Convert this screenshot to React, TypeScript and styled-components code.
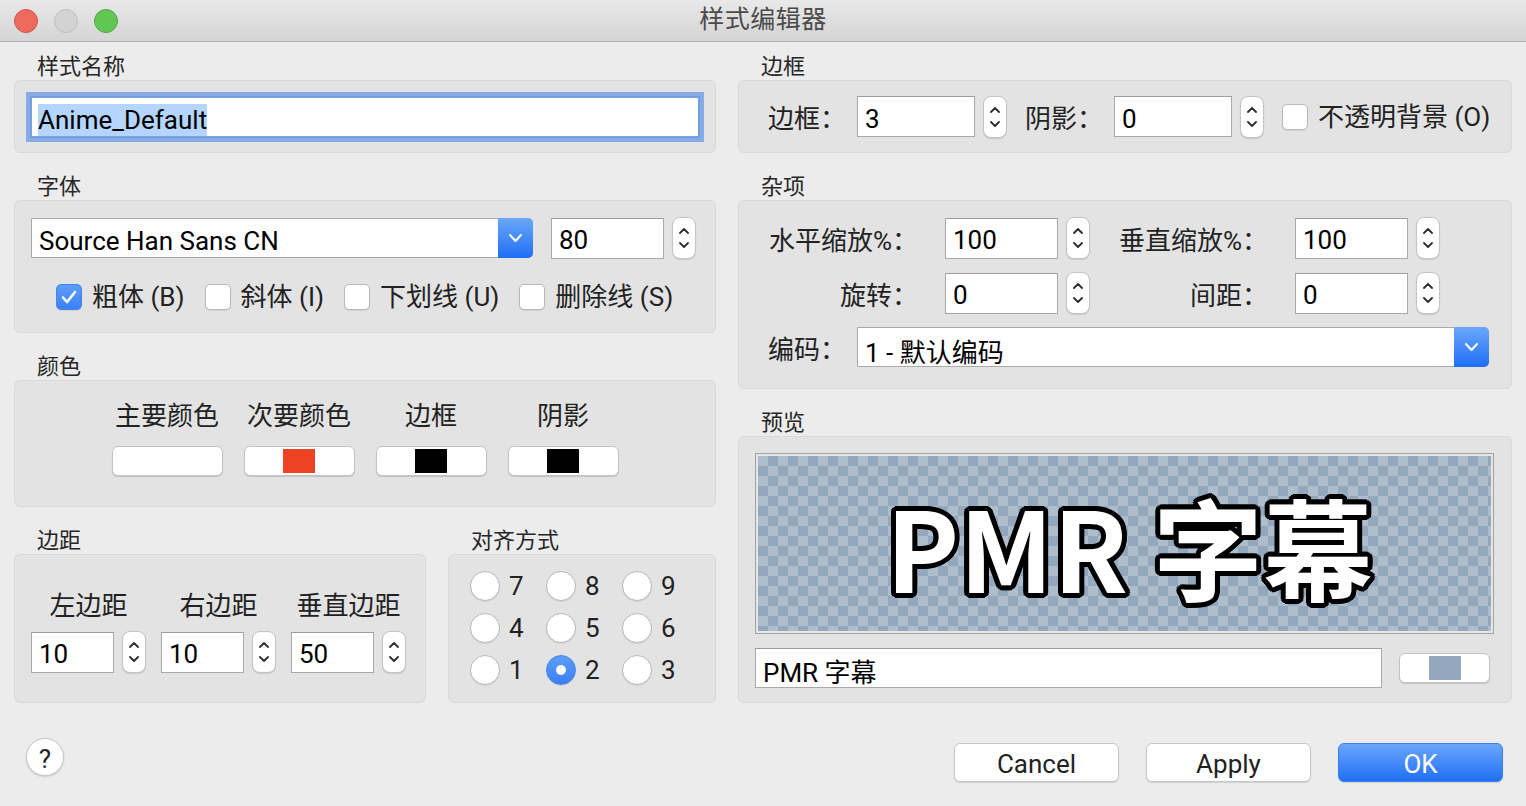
import React from "react";
import styled, { createGlobalStyle } from "styled-components";

const FONT = `Roboto, "Noto Sans CJK SC", sans-serif`;

const GlobalStyle = createGlobalStyle`
  * { box-sizing: border-box; }
  html, body { margin: 0; padding: 0; background: #ececec; }
  body { font-family: ${FONT}; color: #222; }
`;

const outline = (r: number, c: string) => {
  const s: string[] = [];
  for (let a = 0; a < 360; a += 20) {
    const x = (r * Math.cos((a * Math.PI) / 180)).toFixed(1);
    const y = (r * Math.sin((a * Math.PI) / 180)).toFixed(1);
    s.push(`${x}px ${y}px 0 ${c}`);
  }
  return s.join(", ");
};

const Window = styled.div`
  width: 1526px;
  height: 806px;
  display: flex;
  flex-direction: column;
  background: #ececec;
  overflow: hidden;
`;

const TitleBar = styled.header`
  flex: none;
  height: 42px;
  display: grid;
  grid-template-columns: 1fr auto 1fr;
  align-items: center;
  background: linear-gradient(#e9e9e9, #d4d4d4);
  border-bottom: 1px solid #b3b3b3;
`;

const Lights = styled.div`
  display: flex;
  gap: 16px;
  padding-left: 14px;
`;

const Light = styled.span<{ $c: string; $b: string }>`
  width: 24px;
  height: 24px;
  border-radius: 50%;
  background: ${(p) => p.$c};
  border: 1px solid ${(p) => p.$b};
`;

const Title = styled.div`
  font-size: 25px;
  line-height: 30px;
  margin-top: -1px;
  color: #4b4b4b;
  letter-spacing: 0.5px;
`;

const Main = styled.main`
  flex: none;
  display: flex;
  gap: 22px;
  padding: 0 14px;
`;

const Column = styled.div<{ $w: number }>`
  width: ${(p) => p.$w}px;
  display: flex;
  flex-direction: column;
  gap: 9px;
`;

const SplitRow = styled.div`
  display: flex;
  gap: 22px;
`;

const Section = styled.section<{ $w?: number }>`
  display: flex;
  flex-direction: column;
  ${(p) => (p.$w ? `width: ${p.$w}px;` : "")}
`;

const GroupTitle = styled.div`
  height: 38px;
  padding: 12px 0 0 23px;
  font-size: 22px;
  line-height: 26px;
  color: #262626;
`;

const GroupBox = styled.div<{ $h: number }>`
  height: ${(p) => p.$h}px;
  background: #e3e3e3;
  border: 1px solid #d9d9d9;
  border-radius: 6px;
`;

/* ---------- controls ---------- */

const TextField = styled.div<{ $w?: number; $h?: number }>`
  ${(p) => (p.$w ? `width: ${p.$w}px;` : "flex: 1;")}
  height: ${(p) => p.$h ?? 41}px;
  background: #fff;
  border: 1px solid #a9a9a9;
  border-top-color: #9d9d9d;
  padding: 4px 7px 0;
  display: flex;
  align-items: center;
  font-size: 26px;
  color: #000;
  white-space: nowrap;
`;

const FocusField = styled(TextField)`
  box-shadow: 0 0 0 1px #6f9be0, 0 0 0 5px #88abe6;
  border-color: #7ba1e2;
  padding: 6px 6px 0;
`;

const Selection = styled.span`
  background: #b4d5fe;
  line-height: 32px;
`;

const SpinButton = styled.div`
  flex: none;
  width: 24px;
  height: 42px;
  background: #fff;
  border: 1px solid #c4c4c4;
  border-radius: 8px;
  box-shadow: 0 1px 1px rgba(0, 0, 0, 0.12);
  display: flex;
  flex-direction: column;
  align-items: center;
  justify-content: center;
  gap: 8px;
`;

const SpinBox = styled.div`
  display: flex;
  align-items: center;
  gap: 8px;
`;

const Chevron = ({ up, color = "#2e2e2e", w = 10, h = 6, sw = 1.8 }: { up?: boolean; color?: string; w?: number; h?: number; sw?: number }) => (
  <svg width={w} height={h} viewBox={`0 0 ${w} ${h}`} fill="none">
    <path
      d={up ? `M1 ${h - 1} L${w / 2} 1 L${w - 1} ${h - 1}` : `M1 1 L${w / 2} ${h - 1} L${w - 1} 1`}
      stroke={color}
      strokeWidth={sw}
      strokeLinecap="round"
      strokeLinejoin="round"
    />
  </svg>
);

const Spin = ({ value, w = 113 }: { value: string; w?: number }) => (
  <SpinBox>
    <TextField $w={w}>{value}</TextField>
    <SpinButton>
      <Chevron up />
      <Chevron />
    </SpinButton>
  </SpinBox>
);

const Combo = styled.div<{ $w: number }>`
  width: ${(p) => p.$w}px;
  height: 40px;
  display: flex;
  background: #fff;
  border: 1px solid #a9a9a9;
  border-radius: 0 5px 5px 0;
`;

const ComboText = styled.div`
  flex: 1;
  padding: 6px 0 0 7px;
  display: flex;
  align-items: center;
  font-size: 26px;
  color: #000;
`;

const ComboButton = styled.div`
  width: 35px;
  margin: -1px -1px -1px 0;
  background: linear-gradient(#6ba7fb, #1f6ff5);
  border-radius: 0 5px 5px 0;
  display: flex;
  align-items: center;
  justify-content: center;
`;

const ComboBox = ({ text, w }: { text: string; w: number }) => (
  <Combo $w={w}>
    <ComboText>{text}</ComboText>
    <ComboButton>
      <Chevron color="#fff" w={13} h={8} sw={2} />
    </ComboButton>
  </Combo>
);

const CheckMark = styled.span<{ $on?: boolean }>`
  flex: none;
  width: 26px;
  height: 26px;
  border-radius: 5px;
  background: ${(p) => (p.$on ? "linear-gradient(#5d9df9, #3b80f6)" : "#fff")};
  border: 1px solid ${(p) => (p.$on ? "#4584ea" : "#b8b8b8")};
  box-shadow: 0 1px 1px rgba(0, 0, 0, 0.08);
  display: flex;
  align-items: center;
  justify-content: center;
`;

const Option = styled.label`
  display: flex;
  align-items: center;
  gap: 10px;
  height: 30px;
  line-height: 30px;
  font-size: 26px;
  color: #222;
  white-space: nowrap;
`;

const CheckOption = ({ label, on }: { label: string; on?: boolean }) => (
  <Option>
    <CheckMark $on={on}>
      {on && (
        <svg width="16" height="14" viewBox="0 0 16 14" fill="none">
          <path d="M2 7.5 L6 12 L14 2" stroke="#fff" strokeWidth="2.6" strokeLinecap="round" strokeLinejoin="round" />
        </svg>
      )}
    </CheckMark>
    {label}
  </Option>
);

const RadioDot = styled.span<{ $on?: boolean }>`
  flex: none;
  width: 30px;
  height: 30px;
  border-radius: 50%;
  background: ${(p) => (p.$on ? "linear-gradient(#5d9df9, #3b80f6)" : "#fff")};
  border: 1px solid ${(p) => (p.$on ? "#4584ea" : "#b8b8b8")};
  box-shadow: 0 1px 1px rgba(0, 0, 0, 0.08);
  display: flex;
  align-items: center;
  justify-content: center;
  &::after {
    content: "";
    display: ${(p) => (p.$on ? "block" : "none")};
    width: 10px;
    height: 10px;
    border-radius: 50%;
    background: #fff;
  }
`;

const RadioOption = styled.label`
  display: flex;
  align-items: center;
  gap: 9px;
  height: 30px;
  font-size: 26px;
  color: #222;
`;

const ColorButton = styled.div<{ $w?: number }>`
  width: ${(p) => p.$w ?? 111}px;
  height: 30px;
  background: #fff;
  border: 1px solid #c4c4c4;
  border-radius: 6px;
  box-shadow: 0 1px 1px rgba(0, 0, 0, 0.15);
  display: flex;
  align-items: center;
  justify-content: center;
`;

const Swatch = styled.span<{ $c?: string }>`
  width: 32px;
  height: 24px;
  background: ${(p) => p.$c ?? "transparent"};
`;

const FieldLabel = styled.span<{ $w: number }>`
  flex: none;
  width: ${(p) => p.$w}px;
  text-align: right;
  font-size: 26px;
  color: #222;
  white-space: nowrap;
`;

/* ---------- group contents ---------- */

const NameBox = styled(GroupBox)`
  display: flex;
  align-items: center;
  padding: 0 16px;
`;

const FontBox = styled(GroupBox)`
  padding: 16px 16px 0;
  display: flex;
  flex-direction: column;
  gap: 23px;
`;

const FontRow = styled.div`
  display: flex;
  align-items: center;
  gap: 18px;
`;

const StyleRow = styled.div`
  display: flex;
  align-items: center;
  gap: 20px;
  padding-left: 25px;
`;

const ColorBox = styled(GroupBox)`
  padding-top: 20px;
  display: grid;
  grid-template-columns: repeat(4, 111px);
  grid-template-rows: 30px 30px;
  column-gap: 21px;
  row-gap: 15px;
  justify-content: center;
  align-content: start;
`;

const CenterLabel = styled.div`
  text-align: center;
  font-size: 26px;
  line-height: 30px;
  color: #222;
  white-space: nowrap;
`;

const MarginBox = styled(GroupBox)`
  padding: 36px 16px 0;
  display: grid;
  grid-template-columns: repeat(3, 115px);
  grid-auto-flow: column;
  grid-template-rows: 30px 42px;
  column-gap: 15px;
  row-gap: 10px;
  align-content: start;
`;

const AlignBox = styled(GroupBox)`
  padding: 16px 0 0 21px;
  display: grid;
  grid-template-columns: repeat(3, 76px);
  grid-auto-rows: 30px;
  row-gap: 12px;
  align-content: start;
`;

const BorderBox = styled(GroupBox)`
  display: flex;
  align-items: center;
  gap: 18px;
  padding-left: 29px;
`;

const LabeledSpin = styled.div<{ $gap: number }>`
  display: flex;
  align-items: center;
  gap: ${(p) => p.$gap}px;
`;

const MiscBox = styled(GroupBox)`
  padding: 16px 0 0 29px;
  display: flex;
  flex-direction: column;
  gap: 13px;
`;

const MiscRow = styled.div`
  display: flex;
  align-items: center;
  gap: 28px;
`;

const PreviewBox = styled(GroupBox)`
  padding: 16px 17px 0 16px;
  display: flex;
  flex-direction: column;
  gap: 14px;
`;

const PreviewFrame = styled.div`
  height: 181px;
  border: 1px solid #a2a2a2;
  padding: 2px;
  background: #e6e6e6;
`;

const Checker = styled.div`
  height: 100%;
  background-color: #aebdcc;
  background-image: conic-gradient(#94a8bd 25%, transparent 0 50%, #94a8bd 0 75%, transparent 0);
  background-size: 20px 20px;
  display: flex;
  align-items: center;
  justify-content: center;
  overflow: hidden;
`;

const PreviewText = styled.div`
  font-family: "Noto Sans CJK SC", sans-serif;
  font-weight: 700;
  font-size: 110px;
  line-height: 1;
  color: #fff;
  white-space: pre;
  margin: 2px 0 0 10px;
  text-shadow: ${outline(5, "#000")}, ${outline(3, "#000")};
`;

const PreviewRow = styled.div`
  display: flex;
  align-items: center;
  gap: 17px;
  padding-right: 4px;
`;

/* ---------- footer ---------- */

const Footer = styled.footer`
  flex: 1;
  display: flex;
  align-items: flex-start;
  padding: 35px 23px 0 26px;
`;

const HelpButton = styled.div`
  width: 38px;
  height: 38px;
  border-radius: 50%;
  background: #fff;
  border: 1px solid #c8c8c8;
  box-shadow: 0 1px 2px rgba(0, 0, 0, 0.15);
  display: flex;
  align-items: center;
  justify-content: center;
  padding-top: 3px;
  font-size: 26px;
  color: #222;
`;

const ButtonBar = styled.div`
  margin-left: auto;
  margin-top: 5px;
  display: flex;
  gap: 27px;
`;

const PushButton = styled.button<{ $primary?: boolean }>`
  width: 165px;
  height: 39px;
  border-radius: 6px;
  font-family: ${FONT};
  font-size: 26px;
  padding: 3px 0 0;
  color: ${(p) => (p.$primary ? "#fff" : "#222")};
  background: ${(p) => (p.$primary ? "linear-gradient(#6aa6fa, #1f6ff5)" : "#fff")};
  border: 1px solid ${(p) => (p.$primary ? "#3a7ef0" : "#c6c6c6")};
  box-shadow: 0 1px 1px rgba(0, 0, 0, 0.12);
`;

export default function App() {
  return (
    <>
      <GlobalStyle />
      <Window>
        <TitleBar>
          <Lights>
            <Light $c="#ee6a5f" $b="#d5554b" />
            <Light $c="#d3d3d3" $b="#bebebe" />
            <Light $c="#62c655" $b="#50ab42" />
          </Lights>
          <Title>样式编辑器</Title>
          <span />
        </TitleBar>
        <Main>
          <Column $w={702}>
            <Section>
              <GroupTitle>样式名称</GroupTitle>
              <NameBox $h={73}>
                <FocusField $w={668} $h={40}>
                  <Selection>Anime_Default</Selection>
                </FocusField>
              </NameBox>
            </Section>
            <Section>
              <GroupTitle>字体</GroupTitle>
              <FontBox $h={133}>
                <FontRow>
                  <ComboBox text="Source Han Sans CN" w={502} />
                  <Spin value="80" />
                </FontRow>
                <StyleRow>
                  <CheckOption label="粗体 (B)" on />
                  <CheckOption label="斜体 (I)" />
                  <CheckOption label="下划线 (U)" />
                  <CheckOption label="删除线 (S)" />
                </StyleRow>
              </FontBox>
            </Section>
            <Section>
              <GroupTitle>颜色</GroupTitle>
              <ColorBox $h={127}>
                <CenterLabel>主要颜色</CenterLabel>
                <CenterLabel>次要颜色</CenterLabel>
                <CenterLabel>边框</CenterLabel>
                <CenterLabel>阴影</CenterLabel>
                <ColorButton>
                  <Swatch />
                </ColorButton>
                <ColorButton>
                  <Swatch $c="#ee4225" />
                </ColorButton>
                <ColorButton>
                  <Swatch $c="#000" />
                </ColorButton>
                <ColorButton>
                  <Swatch $c="#000" />
                </ColorButton>
              </ColorBox>
            </Section>
            <SplitRow>
              <Section $w={412}>
                <GroupTitle>边距</GroupTitle>
                <MarginBox $h={149}>
                  <CenterLabel>左边距</CenterLabel>
                  <Spin value="10" w={83} />
                  <CenterLabel>右边距</CenterLabel>
                  <Spin value="10" w={83} />
                  <CenterLabel>垂直边距</CenterLabel>
                  <Spin value="50" w={83} />
                </MarginBox>
              </Section>
              <Section $w={268}>
                <GroupTitle>对齐方式</GroupTitle>
                <AlignBox $h={149}>
                  {["7", "8", "9", "4", "5", "6", "1", "2", "3"].map((n) => (
                    <RadioOption key={n}>
                      <RadioDot $on={n === "2"} />
                      {n}
                    </RadioOption>
                  ))}
                </AlignBox>
              </Section>
            </SplitRow>
          </Column>
          <Column $w={774}>
            <Section>
              <GroupTitle>边框</GroupTitle>
              <BorderBox $h={73}>
                <LabeledSpin $gap={11}>
                  <FieldLabel $w={78}>边框：</FieldLabel>
                  <Spin value="3" w={118} />
                </LabeledSpin>
                <LabeledSpin $gap={11}>
                  <FieldLabel $w={78}>阴影：</FieldLabel>
                  <Spin value="0" w={118} />
                </LabeledSpin>
                <CheckOption label="不透明背景 (O)" />
              </BorderBox>
            </Section>
            <Section>
              <GroupTitle>杂项</GroupTitle>
              <MiscBox $h={189}>
                <MiscRow>
                  <LabeledSpin $gap={27}>
                    <FieldLabel $w={150}>水平缩放%：</FieldLabel>
                    <Spin value="100" />
                  </LabeledSpin>
                  <LabeledSpin $gap={27}>
                    <FieldLabel $w={150}>垂直缩放%：</FieldLabel>
                    <Spin value="100" />
                  </LabeledSpin>
                </MiscRow>
                <MiscRow>
                  <LabeledSpin $gap={27}>
                    <FieldLabel $w={150}>旋转：</FieldLabel>
                    <Spin value="0" />
                  </LabeledSpin>
                  <LabeledSpin $gap={27}>
                    <FieldLabel $w={150}>间距：</FieldLabel>
                    <Spin value="0" />
                  </LabeledSpin>
                </MiscRow>
                <LabeledSpin $gap={11}>
                  <FieldLabel $w={78}>编码：</FieldLabel>
                  <ComboBox text="1 - 默认编码" w={632} />
                </LabeledSpin>
              </MiscBox>
            </Section>
            <Section>
              <GroupTitle>预览</GroupTitle>
              <PreviewBox $h={267}>
                <PreviewFrame>
                  <Checker>
                    <PreviewText>PMR 字幕</PreviewText>
                  </Checker>
                </PreviewFrame>
                <PreviewRow>
                  <TextField $h={40}>PMR 字幕</TextField>
                  <ColorButton $w={91}>
                    <Swatch $c="#94a8bd" />
                  </ColorButton>
                </PreviewRow>
              </PreviewBox>
            </Section>
          </Column>
        </Main>
        <Footer>
          <HelpButton>?</HelpButton>
          <ButtonBar>
            <PushButton>Cancel</PushButton>
            <PushButton>Apply</PushButton>
            <PushButton $primary>OK</PushButton>
          </ButtonBar>
        </Footer>
      </Window>
    </>
  );
}
